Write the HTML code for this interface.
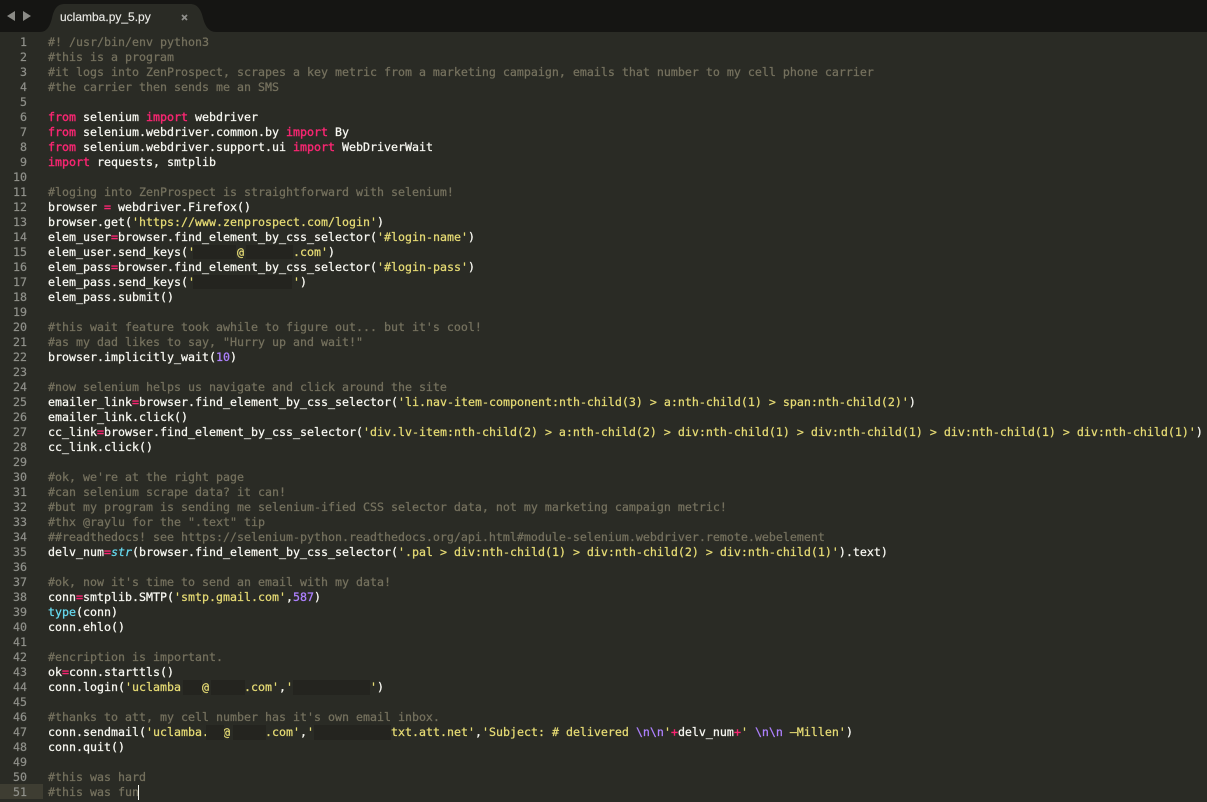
<!DOCTYPE html>
<html><head><meta charset="utf-8">
<style>
html,body{margin:0;padding:0;background:#2a2b25;}
#w{position:relative;width:1207px;height:802px;overflow:hidden;background:#2a2b25;font-family:"DejaVu Sans Mono","Liberation Mono",monospace;}
#top{position:absolute;left:0;top:0;width:1207px;height:32px;background:#151513;}
.tabt{position:absolute;left:60px;top:10px;font:12px/15px "Liberation Sans",sans-serif;color:#e8e8e4;-webkit-text-stroke:.15px #e8e8e4;}
#g{position:absolute;left:0;top:35px;width:27px;text-align:right;font-size:11.63px;line-height:15px;color:#8f908a;white-space:pre;-webkit-text-stroke:.2px #8f908a;}
#c{position:absolute;left:48px;top:35px;font-size:11.63px;line-height:15px;color:#f8f8f2;white-space:pre;-webkit-text-stroke:.25px;}
i{font-style:normal;color:#75715e}
b{font-weight:normal;color:#f92672;-webkit-text-stroke:.4px #f92672}
s{text-decoration:none;color:#e6db74}
u{text-decoration:none;color:#ae81ff}
em{color:#66d9ef}
.r{position:absolute;background:#24241f;}
</style></head><body><div id="w">
<div id="top"></div>
<svg style="position:absolute;left:0;top:0" width="260" height="34">
<path d="M40 32 C47 32 50 26 52 18 C54 9 57 4 65 4 L190 4 C197 4 201 9 203 18 C205 26 209 32 216 32 Z" fill="#2a2b25"/>
<path d="M7 16 L15 11 L15 21 Z M31 16 L23 11 L23 21 Z" fill="#8a8a86"/>
<path d="M182 15 L187 20 M187 15 L182 20" stroke="#8f8f8b" stroke-width="1.7"/>
</svg>
<div class="tabt">uclamba.py_5.py</div>
<div style="position:absolute;left:0;top:784px;width:43px;height:15px;background:#3e3d32"></div>
<div id="g">1
2
3
4
5
6
7
8
9
10
11
12
13
14
15
16
17
18
19
20
21
22
23
24
25
26
27
28
29
30
31
32
33
34
35
36
37
38
39
40
41
42
43
44
45
46
47
48
49
50
51</div>
<div id="c"><i>#! /usr/bin/env python3
#this is a program
#it logs into ZenProspect, scrapes a key metric from a marketing campaign, emails that number to my cell phone carrier
#the carrier then sends me an SMS</i>

<b>from</b> selenium <b>import</b> webdriver
<b>from</b> selenium.webdriver.common.by <b>import</b> By
<b>from</b> selenium.webdriver.support.ui <b>import</b> WebDriverWait
<b>import</b> requests, smtplib

<i>#loging into ZenProspect is straightforward with selenium!</i>
browser <b>=</b> webdriver.Firefox()
browser.get(<s>'https://www.zenprospect.com/login'</s>)
elem_user<b>=</b>browser.find_element_by_css_selector(<s>'#login-name'</s>)
elem_user.send_keys(<s>'      @       .com'</s>)
elem_pass<b>=</b>browser.find_element_by_css_selector(<s>'#login-pass'</s>)
elem_pass.send_keys(<s>'              '</s>)
elem_pass.submit()

<i>#this wait feature took awhile to figure out... but it's cool!
#as my dad likes to say, "Hurry up and wait!"</i>
browser.implicitly_wait(<u>10</u>)

<i>#now selenium helps us navigate and click around the site</i>
emailer_link<b>=</b>browser.find_element_by_css_selector(<s>'li.nav-item-component:nth-child(3) &gt; a:nth-child(1) &gt; span:nth-child(2)'</s>)
emailer_link.click()
cc_link<b>=</b>browser.find_element_by_css_selector(<s>'div.lv-item:nth-child(2) &gt; a:nth-child(2) &gt; div:nth-child(1) &gt; div:nth-child(1) &gt; div:nth-child(1) &gt; div:nth-child(1)'</s>)
cc_link.click()

<i>#ok, we're at the right page
#can selenium scrape data? it can!
#but my program is sending me selenium-ified CSS selector data, not my marketing campaign metric!
#thx @raylu for the ".text" tip
##readthedocs! see https://selenium-python.readthedocs.org/api.html#module-selenium.webdriver.remote.webelement</i>
delv_num<b>=</b><em>str</em>(browser.find_element_by_css_selector(<s>'.pal &gt; div:nth-child(1) &gt; div:nth-child(2) &gt; div:nth-child(1)'</s>).text)

<i>#ok, now it's time to send an email with my data!</i>
conn<b>=</b>smtplib.SMTP(<s>'smtp.gmail.com'</s>,<u>587</u>)
<span style="color:#66d9ef">type</span>(conn)
conn.ehlo()

<i>#encription is important.</i>
ok<b>=</b>conn.starttls()
conn.login(<s>'uclamba   @     .com'</s>,<s>'           '</s>)

<i>#thanks to att, my cell number has it's own email inbox.</i>
conn.sendmail(<s>'uclamba.  @     .com'</s>,<s>'           txt.att.net'</s>,<s>'Subject: # delivered <u>\n\n</u>'</s><b>+</b>delv_num<b>+</b><s>' <u>\n\n</u> –Millen'</s>)
conn.quit()

<i>#this was hard
#this was fun</i></div>
<div style="position:absolute;left:138px;top:785px;width:1px;height:15px;background:#f8f8f0"></div>
<div class="r" style="left:193px;top:245px;width:43px;height:14px"></div>
<div class="r" style="left:246px;top:245px;width:47px;height:14px"></div>
<div class="r" style="left:193px;top:275px;width:99px;height:14px"></div>
<div class="r" style="left:183px;top:680px;width:19px;height:15px"></div>
<div class="r" style="left:211px;top:680px;width:34px;height:15px"></div>
<div class="r" style="left:293px;top:680px;width:77px;height:15px"></div>
<div class="r" style="left:206px;top:725px;width:18px;height:15px"></div>
<div class="r" style="left:233px;top:725px;width:33px;height:15px"></div>
<div class="r" style="left:314px;top:725px;width:77px;height:15px"></div>
</div></body></html>
